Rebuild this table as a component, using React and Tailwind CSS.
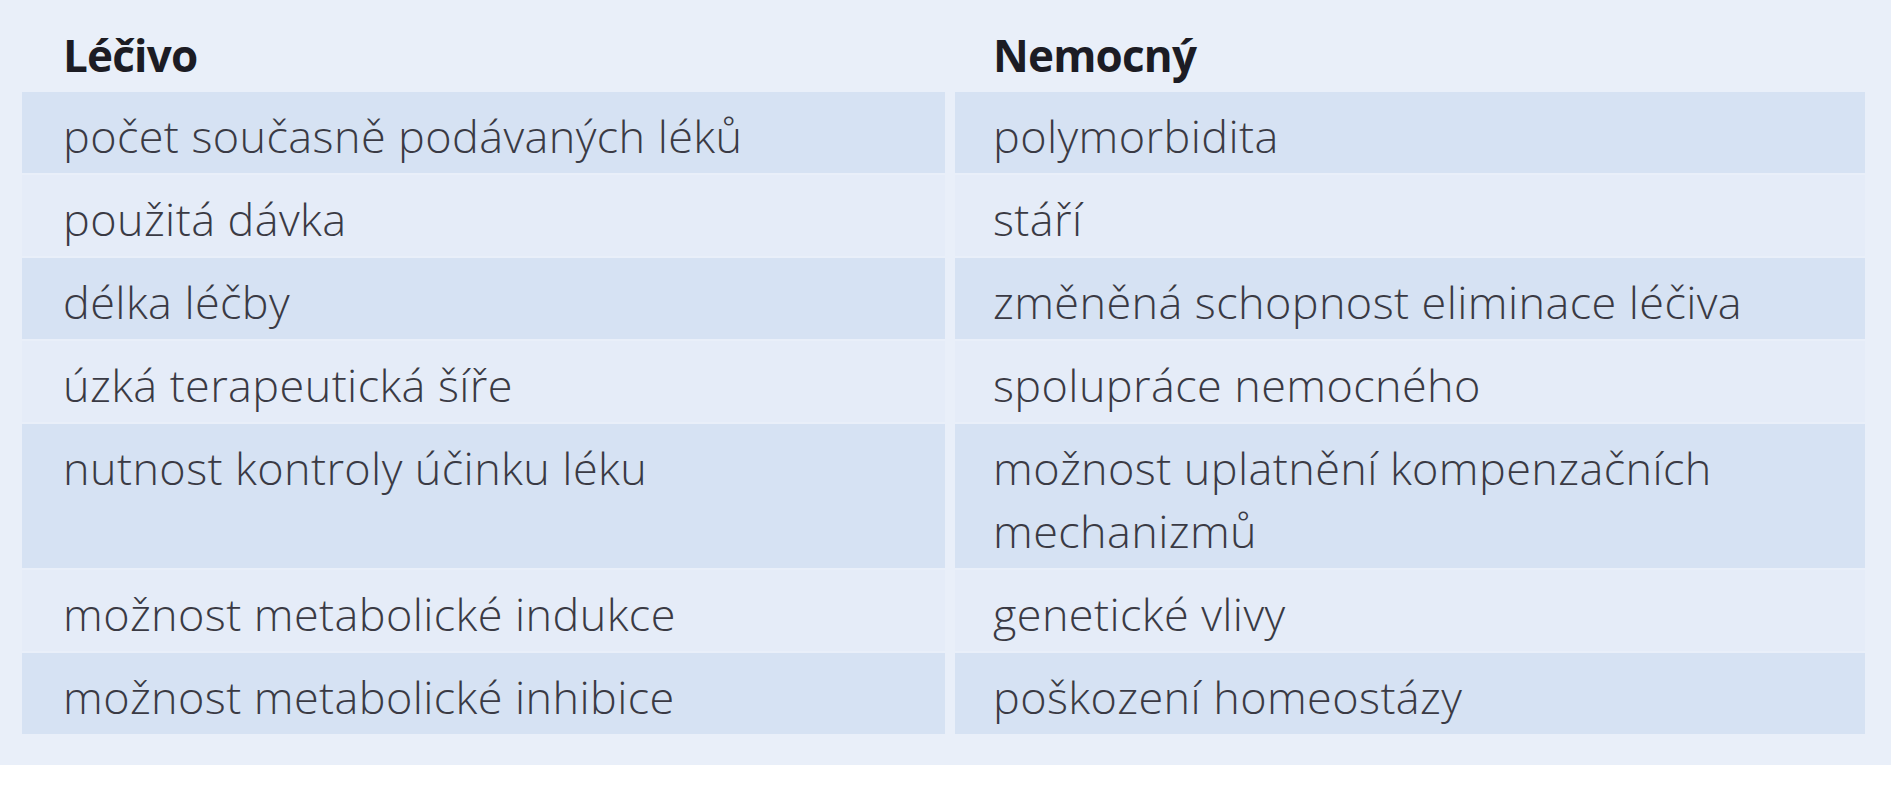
const ROWS = [
  ['počet současně podávaných léků', 'polymorbidita'],
  ['použitá dávka', 'stáří'],
  ['délka léčby', 'změněná schopnost eliminace léčiva'],
  ['úzká terapeutická šíře', 'spolupráce nemocného'],
  ['nutnost kontroly účinku léku', 'možnost uplatnění kompenzačních mechanizmů'],
  ['možnost metabolické indukce', 'genetické vlivy'],
  ['možnost metabolické inhibice', 'poškození homeostázy'],
];

export default function App() {
  return (
    <div className="w-[1895px] h-[800px] bg-white" style={{ fontFamily: '"Open Sans", "Noto Sans", sans-serif' }}>
      <div className="w-[1891px] h-[765px] bg-[#e9eff9] pl-[22px] pr-[26px] pt-[22px]">
        <div className="grid grid-cols-[923px_910px] gap-x-[10px] gap-y-[2px]">
          <div className="h-[68px] pl-[41px] flex items-end pb-[13px] text-[44px] font-bold text-[#1c1c24] tracking-[-0.8px] leading-none">Léčivo</div>
          <div className="h-[68px] pl-[38px] flex items-end pb-[13px] text-[44px] font-bold text-[#1c1c24] tracking-[-0.8px] leading-none">Nemocný</div>
          {ROWS.map((r, i) => (
            <>
              <div key={'a' + i} className={`pl-[41px] pr-4 pt-[12px] pb-[6px] text-[45px] leading-[63px] font-light tracking-[0.4px] text-[#3a3a44] ${i % 2 === 0 ? 'bg-[#d6e2f3]' : 'bg-[#e5ecf8]'}`}>{r[0]}</div>
              <div key={'b' + i} className={`pl-[38px] pr-10 pt-[12px] pb-[6px] text-[45px] leading-[63px] font-light tracking-[0.4px] text-[#3a3a44] ${i % 2 === 0 ? 'bg-[#d6e2f3]' : 'bg-[#e5ecf8]'}`}>{r[1]}</div>
            </>
          ))}
        </div>
      </div>
    </div>
  );
}
